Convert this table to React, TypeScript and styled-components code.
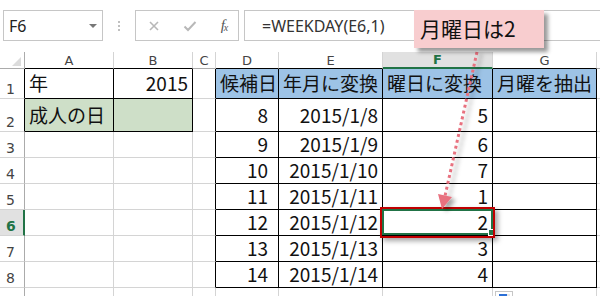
import React from 'react';
import styled, { createGlobalStyle } from 'styled-components';

const GlobalStyle = createGlobalStyle`
  html, body {
    margin: 0;
    padding: 0;
    background: #fff;
  }
  body {
    width: 600px;
    height: 296px;
    overflow: hidden;
  }
`;

const GRID = '#d4d4d4';
const HEAD_LINE = '#ababab';
const EDGE = '#000';
const ACTIVE = '#217346';
const GREEN_FILL = '#cedfc8';
const BLUE_FILL = '#9dc3e6';

// H only peeks in at the right edge, so its letter stays out of view
const COLS = ['A', 'B', 'C', 'D', 'E', 'F', 'G', 'H'];
const COL_WIDTHS = [89, 79, 23, 63, 104, 110, 104, 40];
const ROW_HEIGHTS = [30, 33, 26, 26, 26, 26, 26, 26, 26];
const LABELLED_ROWS = 8;
const ACTIVE_COL = 5;
const ACTIVE_ROW = 6;

type CellSpec = { text?: string; fill?: string; align?: 'left' | 'right'; inset?: number };

const cells: Record<string, CellSpec> = {
  A1: { text: '年' },
  B1: { text: '2015', align: 'right' },
  A2: { text: '成人の日', fill: GREEN_FILL },
  B2: { fill: GREEN_FILL },
  D1: { text: '候補日', fill: BLUE_FILL },
  E1: { text: '年月に変換', fill: BLUE_FILL },
  F1: { text: '曜日に変換', fill: BLUE_FILL },
  G1: { text: '月曜を抽出', fill: BLUE_FILL },
};

const weekdays = [5, 6, 7, 1, 2, 3, 4];
weekdays.forEach((w, i) => {
  const row = i + 2;
  const day = i + 8;
  cells[`D${row}`] = { text: String(day), align: 'right', inset: 10 };
  cells[`E${row}`] = { text: `2015/1/${day}`, align: 'right' };
  cells[`F${row}`] = { text: String(w), align: 'right' };
});

// the two bordered tables: A1:B2 and D1:G8
const inTable = (r: number, c: number) =>
  (r >= 1 && r <= 2 && c >= 0 && c <= 1) || (r >= 1 && r <= 8 && c >= 3 && c <= 6);

const Page = styled.div`
  position: relative;
  width: 600px;
  height: 296px;
  overflow: hidden;
`;

const Toolbar = styled.div`
  display: flex;
  align-items: stretch;
  height: 31px;
  padding: 10px 0 0 3px;
  font-family: 'Noto Sans', 'DejaVu Sans', sans-serif;
`;

const NameBox = styled.div`
  width: 100px;
  box-sizing: border-box;
  border: 1px solid #c6c6c6;
  display: flex;
  align-items: center;
  justify-content: space-between;
  padding: 0 5px 0 5px;
  font-size: 16px;
  color: #222;
`;

const Caret = styled.span`
  width: 0;
  height: 0;
  border-left: 4px solid transparent;
  border-right: 4px solid transparent;
  border-top: 4px solid #777;
`;

const Grip = styled.div`
  width: 32px;
  display: flex;
  flex-direction: column;
  align-items: center;
  justify-content: center;
  gap: 2px;
`;

const GripDot = styled.span`
  width: 2px;
  height: 2px;
  background: #c0c0c0;
`;

const FnBox = styled.div`
  width: 104px;
  box-sizing: border-box;
  border: 1px solid #c6c6c6;
  display: grid;
  grid-template-columns: 36px 36px 32px;
  align-items: center;
  justify-items: center;
`;

const FxLabel = styled.span`
  font-family: 'Liberation Serif', serif;
  font-style: italic;
  font-size: 15px;
  color: #555;
  letter-spacing: -1px;

  sub {
    font-size: 10px;
    vertical-align: -1px;
  }
`;

const FormulaBox = styled.div`
  flex: 1;
  margin-left: 5px;
  border: 1px solid #c6c6c6;
  border-right: none;
  display: flex;
  align-items: center;
  padding-left: 17px;
  font-size: 16px;
  color: #333;
`;

const Sheet = styled.div`
  display: grid;
  grid-template-columns: 25px ${COL_WIDTHS.map((w) => `${w}px`).join(' ')};
  grid-template-rows: 17px ${ROW_HEIGHTS.map((h) => `${h}px`).join(' ')};
  margin-top: 11px;
`;

const Corner = styled.div`
  box-sizing: border-box;
  border-right: 1px solid ${HEAD_LINE};
  border-bottom: 1px solid ${HEAD_LINE};
  display: flex;
  align-items: flex-end;
  justify-content: flex-end;
  padding: 0 3px 2px 0;
`;

const ColHead = styled.div<{ $active?: boolean; $bottom: string }>`
  box-sizing: border-box;
  display: flex;
  align-items: flex-end;
  justify-content: center;
  padding-bottom: 1px;
  border-right: 1px solid ${GRID};
  border-bottom: ${(p) => (p.$active ? `2px solid ${ACTIVE}` : `1px solid ${p.$bottom}`)};
  background: ${(p) => (p.$active ? '#e1e1e1' : '#fff')};
  color: ${(p) => (p.$active ? ACTIVE : '#444')};
  font-weight: ${(p) => (p.$active ? 700 : 400)};
  font-family: 'DejaVu Sans', sans-serif;
  font-size: 13px;
  line-height: 1;
`;

const RowHead = styled.div<{ $active?: boolean; $right: string }>`
  box-sizing: border-box;
  display: flex;
  align-items: flex-end;
  padding: 0 0 2px 6px;
  border-bottom: 1px solid ${GRID};
  border-right: ${(p) => (p.$active ? `2px solid ${ACTIVE}` : `1px solid ${p.$right}`)};
  background: ${(p) => (p.$active ? '#e1e1e1' : '#fff')};
  color: ${(p) => (p.$active ? ACTIVE : '#444')};
  font-weight: ${(p) => (p.$active ? 700 : 400)};
  font-family: 'DejaVu Sans', sans-serif;
  font-size: 14px;
  line-height: 1;
`;

const Cell = styled.div<{ $fill?: string; $align?: string; $inset?: number; $right: string; $bottom: string }>`
  position: relative;
  box-sizing: border-box;
  display: flex;
  align-items: center;
  justify-content: ${(p) => (p.$align === 'right' ? 'flex-end' : 'flex-start')};
  padding: 0 ${(p) => p.$inset ?? 4}px 2px 4px;
  border-right: 1px solid ${(p) => p.$right};
  border-bottom: 1px solid ${(p) => p.$bottom};
  background: ${(p) => p.$fill ?? '#fff'};
  font-family: 'Noto Sans CJK JP', sans-serif;
  font-size: 19px;
  line-height: 1;
  color: #111;
  white-space: nowrap;
`;

const ActiveFrame = styled.div`
  position: absolute;
  left: -1px;
  top: -1px;
  right: -1px;
  bottom: 0;
  border: 2px solid ${ACTIVE};
  z-index: 2;
`;

const FillHandle = styled.div`
  position: absolute;
  right: -4px;
  bottom: -3px;
  width: 5px;
  height: 5px;
  background: ${ACTIVE};
  border: 1px solid #fff;
`;

const Highlight = styled.div`
  position: absolute;
  left: -3px;
  top: -3px;
  right: -3px;
  bottom: -3px;
  border: 2px solid #c00000;
  box-shadow: 3px 3px 5px rgba(0, 0, 0, 0.35);
  z-index: 3;
`;

const Callout = styled.div`
  position: absolute;
  left: 414px;
  top: 10px;
  width: 130px;
  height: 38px;
  box-sizing: border-box;
  padding: 0 0 2px 6px;
  display: flex;
  align-items: center;
  background: #f8cdcf;
  box-shadow: 4px 4px 4px rgba(0, 0, 0, 0.4);
  font-family: 'Noto Sans CJK JP', sans-serif;
  font-size: 21px;
  color: #111;
  z-index: 5;
`;

const Pointer = styled.svg`
  position: absolute;
  left: 0;
  top: 0;
  z-index: 4;
  pointer-events: none;
`;

const PasteTag = styled.div`
  position: absolute;
  left: 495px;
  top: 291px;
  width: 18px;
  height: 12px;
  box-sizing: border-box;
  border: 1px solid #c6c6c6;
  background: #fff;
  padding: 2px 0 0 3px;
  z-index: 3;
`;

const PasteGlyph = styled.div`
  width: 8px;
  height: 8px;
  background: #2b6fd6;
  border-right: 3px solid #e8e8e8;
`;

const CrossIcon = () => (
  <svg width="12" height="12" viewBox="0 0 12 12">
    <path d="M2 2 L10 10 M10 2 L2 10" stroke="#b8b8b8" strokeWidth="1.6" />
  </svg>
);

const CheckIcon = () => (
  <svg width="14" height="12" viewBox="0 0 14 12">
    <path d="M1.5 6.5 L5 10 L12.5 2" stroke="#b8b8b8" strokeWidth="2" fill="none" />
  </svg>
);

const CornerMark = () => (
  <svg width="9" height="9" viewBox="0 0 9 9">
    <polygon points="9,0 9,9 0,9" fill="#dcdcdc" />
  </svg>
);

const App: React.FC = () => {
  const rowCount = ROW_HEIGHTS.length;

  const renderRow = (r: number) => {
    const rowEdge = inTable(r, 0) ? EDGE : HEAD_LINE;
    return (
      <React.Fragment key={r}>
        <RowHead $active={r === ACTIVE_ROW} $right={rowEdge}>
          {r <= LABELLED_ROWS ? r : null}
        </RowHead>
        {COLS.map((col, c) => {
          const spec = cells[`${col}${r}`] ?? {};
          const right = inTable(r, c) || inTable(r, c + 1) ? EDGE : GRID;
          const bottom = inTable(r, c) || inTable(r + 1, c) ? EDGE : GRID;
          const isActive = r === ACTIVE_ROW && c === ACTIVE_COL;
          return (
            <Cell
              key={col}
              $fill={spec.fill}
              $align={spec.align}
              $inset={spec.inset}
              $right={right}
              $bottom={bottom}
            >
              {spec.text}
              {isActive && (
                <>
                  <ActiveFrame>
                    <FillHandle />
                  </ActiveFrame>
                  <Highlight />
                </>
              )}
            </Cell>
          );
        })}
      </React.Fragment>
    );
  };

  return (
    <Page>
      <GlobalStyle />
      <Toolbar>
        <NameBox>
          F6
          <Caret />
        </NameBox>
        <Grip>
          <GripDot />
          <GripDot />
          <GripDot />
        </Grip>
        <FnBox>
          <CrossIcon />
          <CheckIcon />
          <FxLabel>
            f<sub>x</sub>
          </FxLabel>
        </FnBox>
        <FormulaBox>=WEEKDAY(E6,1)</FormulaBox>
      </Toolbar>

      <Sheet>
        <Corner>
          <CornerMark />
        </Corner>
        {COLS.map((col, c) => (
          <ColHead key={col} $active={c === ACTIVE_COL} $bottom={inTable(1, c) ? EDGE : HEAD_LINE}>
            {c < COLS.length - 1 ? col : null}
          </ColHead>
        ))}
        {Array.from({ length: rowCount }, (_, i) => renderRow(i + 1))}
      </Sheet>

      <Callout>月曜日は2</Callout>

      <Pointer width="600" height="296" viewBox="0 0 600 296">
        <defs>
          <filter id="pointer-shadow" x="-50%" y="-10%" width="200%" height="130%">
            <feDropShadow dx="4" dy="3" stdDeviation="2" floodColor="#000" floodOpacity="0.35" />
          </filter>
        </defs>
        <g filter="url(#pointer-shadow)">
          <line
            x1="477"
            y1="52"
            x2="445"
            y2="196"
            stroke="#e8717f"
            strokeWidth="3"
            strokeDasharray="3 3"
          />
          <polygon points="438,194 452,197 442,209" fill="#e8717f" />
        </g>
      </Pointer>

      <PasteTag>
        <PasteGlyph />
      </PasteTag>
    </Page>
  );
};

export default App;
